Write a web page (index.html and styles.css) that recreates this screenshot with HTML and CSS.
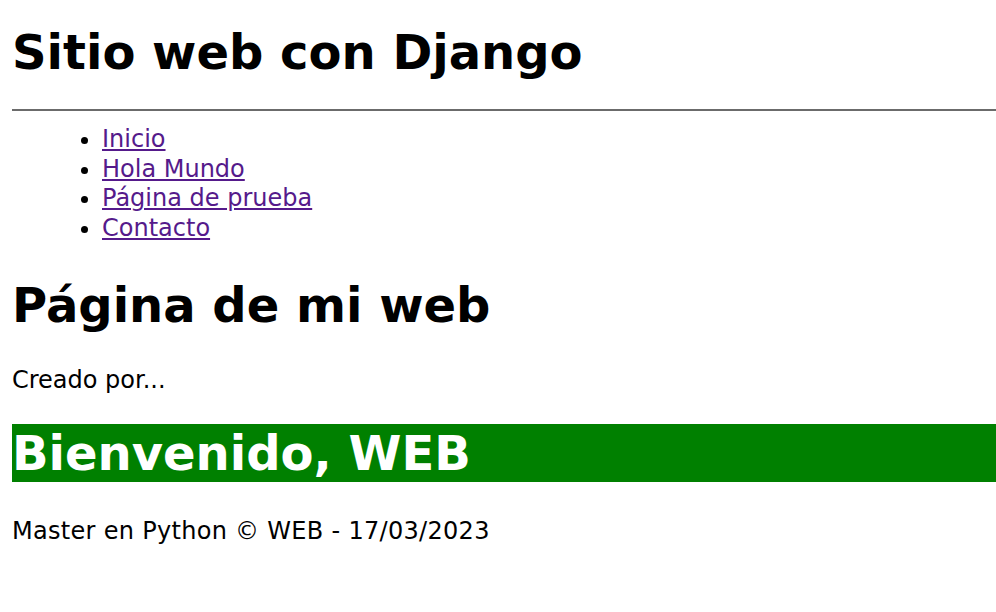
FILE: index.html
```html
<!DOCTYPE html>
<html lang="es">
<head>
<meta charset="utf-8">
<title>Sitio web con Django</title>
<link rel="stylesheet" href="styles.css">
</head>
<body>
<header class="site-header">
<h1 class="site-title">Sitio web con Django</h1>
<hr class="divider">
<nav>
<ul class="menu">
<li><a href="#">Inicio</a></li>
<li><a href="#">Hola Mundo</a></li>
<li><a href="#">Página de prueba</a></li>
<li><a href="#">Contacto</a></li>
</ul>
</nav>
</header>
<main>
<h1 class="page-title">Página de mi web</h1>
<p class="author">Creado por...</p>
<h1 class="welcome">Bienvenido, WEB</h1>
</main>
<footer class="footer">Master en Python © WEB - 17/03/2023</footer>
</body>
</html>
```
FILE: styles.css
```css
html, body {
  margin: 0;
}
body {
  padding: 0 0 20px 12px;
  font-family: "DejaVu Sans", Verdana, sans-serif;
  font-size: 24px;
  line-height: 29.7px;
  color: #000;
}
h1 {
  font-size: 48px;
  line-height: 58px;
  margin: 0;
}
.site-title {
  padding-top: 23px;
  margin-bottom: 28px;
}
.divider {
  margin: 0;
  border: 0;
  border-top: 2px solid #6b6b6b;
  height: 0;
}
.menu {
  margin: 14px 0 0;
  padding-left: 90px;
}
a {
  color: #551a8b;
}
.page-title {
  margin-top: 32px;
}
.author {
  margin: 32px 0 0;
}
.welcome {
  margin-top: 28px;
  background: #008000;
  color: #fff;
}
.footer {
  margin-top: 35px;
  letter-spacing: 0.3px;
}
```
